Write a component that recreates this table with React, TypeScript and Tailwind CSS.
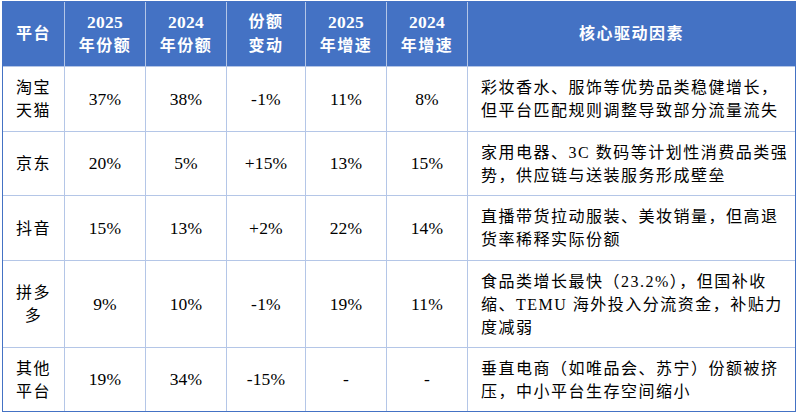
import React from "react";

const FONT = { fontFamily: '"Liberation Serif", "Noto Sans CJK SC", serif' };

type Row = {
  name: string[];
  v: string[];
  desc: string[];
};

const rows: Row[] = [
  {
    name: ["淘宝", "天猫"],
    v: ["37%", "38%", "-1%", "11%", "8%"],
    desc: ["彩妆香水、服饰等优势品类稳健增长，", "但平台匹配规则调整导致部分流量流失"],
  },
  {
    name: ["京东"],
    v: ["20%", "5%", "+15%", "13%", "15%"],
    desc: ["家用电器、3C 数码等计划性消费品类强", "势，供应链与送装服务形成壁垒"],
  },
  {
    name: ["抖音"],
    v: ["15%", "13%", "+2%", "22%", "14%"],
    desc: ["直播带货拉动服装、美妆销量，但高退", "货率稀释实际份额"],
  },
  {
    name: ["拼多", "多"],
    v: ["9%", "10%", "-1%", "19%", "11%"],
    desc: ["食品类增长最快（23.2%），但国补收", "缩、TEMU 海外投入分流资金，补贴力", "度减弱"],
  },
  {
    name: ["其他", "平台"],
    v: ["19%", "34%", "-15%", "-", "-"],
    desc: ["垂直电商（如唯品会、苏宁）份额被挤", "压，中小平台生存空间缩小"],
  },
];

const headers: string[][] = [
  ["平台"],
  ["2025", "年份额"],
  ["2024", "年份额"],
  ["份额", "变动"],
  ["2025", "年增速"],
  ["2024", "年增速"],
  ["核心驱动因素"],
];

const isNum = (s: string) => /^[0-9]+$/.test(s);

export default function App() {
  return (
    <div className="w-[798px] h-[416px] bg-white pl-[2px] pt-[1px]" style={FONT}>
      <div className="w-[794px] border border-[#4472c4] bg-[#b4c6e7] grid grid-cols-[61px_80px_80px_78px_80px_80px_327px] grid-rows-[64px_64px_63px_64px_86px_63px] gap-px">
        {headers.map((h, i) => (
          <div
            key={i}
            className="bg-[#4472c4] text-white font-bold text-[16px] leading-[24px] tracking-[1.5px] flex flex-col items-center justify-center text-center"
          >
            {h.map((l, j) =>
              isNum(l) ? (
                <div key={j} className="whitespace-nowrap text-[17.5px] tracking-[0.2px]">{l}</div>
              ) : (
                <div key={j} className="whitespace-nowrap">{l}</div>
              )
            )}
          </div>
        ))}
        {rows.map((r, i) => (
          <React.Fragment key={i}>
            <div className="bg-white text-black text-[16px] leading-[23px] tracking-[1.5px] flex flex-col items-center justify-center text-center">
              {r.name.map((l, j) => (
                <div key={j} className="whitespace-nowrap">{l}</div>
              ))}
            </div>
            {r.v.map((v, j) => (
              <div
                key={j}
                className="bg-white text-black text-[17.5px] leading-[23px] tracking-[0.2px] flex items-center justify-center whitespace-nowrap"
              >
                {v}
              </div>
            ))}
            <div className="bg-white text-black text-[16px] leading-[23px] tracking-[1.5px] flex flex-col justify-center pl-[13px] pr-[10px]">
              {r.desc.map((l, j) => (
                <div key={j} className="whitespace-nowrap">{l}</div>
              ))}
            </div>
          </React.Fragment>
        ))}
      </div>
    </div>
  );
}
